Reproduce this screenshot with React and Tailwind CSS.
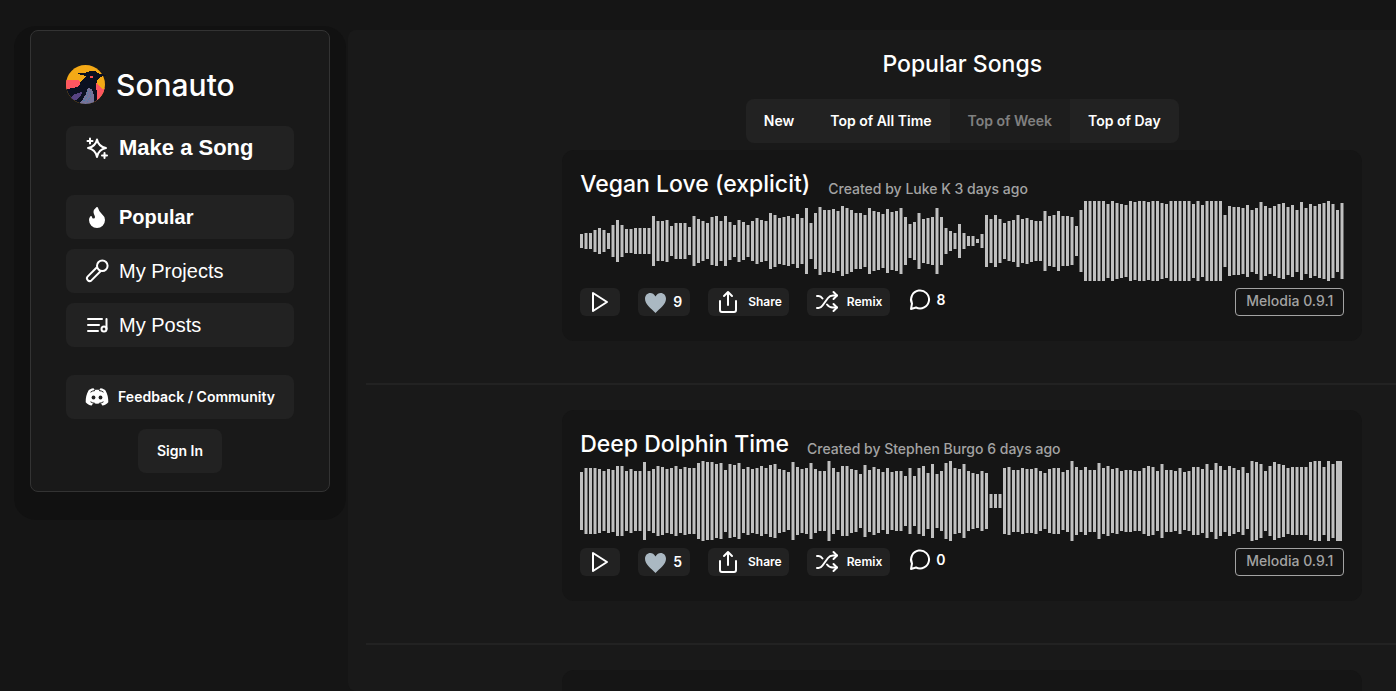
import React, { useState } from "react";
import { Flame } from "lucide-react";

// bar heights, in pixels
const veganLove = [
	14, 16, 16, 22, 26, 22, 16, 32, 42, 32, 24, 24, 26, 26, 26, 26, 50, 40, 40, 42,
	30, 36, 36, 36, 28, 50, 44, 40, 36, 48, 50, 40, 50, 38, 32, 42, 38, 32, 40, 46,
	42, 40, 56, 52, 46, 48, 50, 46, 54, 46, 66, 36, 56, 68, 62, 62, 64, 60, 70, 66,
	62, 56, 56, 52, 66, 60, 58, 54, 64, 58, 60, 66, 48, 34, 38, 56, 44, 46, 48, 66,
	48, 26, 20, 16, 34, 16, 10, 10, 4, 14, 52, 44, 52, 44, 36, 40, 42, 52, 44, 46,
	42, 40, 40, 60, 50, 52, 60, 50, 50, 48, 30, 62, 80, 80, 80, 80, 80, 74, 80, 76,
	74, 72, 80, 78, 80, 80, 78, 80, 80, 76, 74, 80, 80, 80, 80, 80, 74, 80, 72, 80,
	80, 80, 80, 52, 70, 68, 68, 66, 72, 62, 66, 78, 70, 66, 70, 74, 76, 68, 72, 62,
	78, 66, 74, 70, 74, 76, 80, 74, 62, 76,
];

const deepDolphin = [
	58, 66, 66, 66, 64, 60, 64, 62, 70, 70, 60, 64, 60, 60, 78, 60, 64, 70, 68, 64,
	66, 70, 64, 68, 66, 66, 76, 80, 78, 78, 74, 76, 62, 74, 72, 76, 64, 68, 64, 66,
	70, 66, 72, 74, 64, 62, 58, 78, 68, 64, 66, 76, 64, 60, 60, 80, 66, 58, 70, 70,
	64, 62, 54, 72, 62, 68, 64, 58, 66, 58, 60, 60, 50, 66, 50, 66, 70, 56, 74, 54,
	60, 76, 80, 66, 64, 74, 60, 56, 54, 60, 56, 14, 14, 14, 66, 68, 62, 62, 66, 64,
	64, 66, 60, 56, 64, 66, 66, 58, 62, 80, 68, 62, 68, 62, 62, 76, 66, 70, 64, 66,
	60, 62, 62, 60, 60, 66, 70, 68, 60, 74, 62, 62, 60, 66, 58, 60, 68, 68, 64, 74,
	62, 76, 70, 62, 70, 66, 62, 68, 56, 80, 78, 74, 60, 70, 78, 74, 72, 66, 68, 68,
	68, 68, 78, 80, 80, 68, 80, 74, 80,
];

const songs = [
	{ id: 1, title: "Vegan Love (explicit)", credit: "Created by Luke K 3 days ago", likes: 9, comments: 8, bars: veganLove, lastWidth: 3 },
	{ id: 2, title: "Deep Dolphin Time", credit: "Created by Stephen Burgo 6 days ago", likes: 5, comments: 0, bars: deepDolphin, lastWidth: 6 },
];

const tabs = ["New", "Top of All Time", "Top of Week", "Top of Day"];

function Logo() {
	return (
		<svg width="40" height="40" viewBox="0 0 40 40" shapeRendering="crispEdges" aria-hidden="true">
			<clipPath id="disc">
				<circle cx="19.5" cy="19.5" r="19.5" />
			</clipPath>
			<g clipPath="url(#disc)">
				<rect width="40" height="40" fill="#f4a916" />
				<path d="M0 15h12l2 2v8H0z" fill="#fd5660" />
				<path d="M30 18l3 2 3 4 4-1v17H29z" fill="#fd5660" />
				<path d="M0 24l7-1 6-2 2-4 15-1v6l1 6v8l-2 4H8l-8-6z" fill="#0b1020" />
				<path d="M5 32l4-3 7-2-1 4-5 4H5z" fill="#574382" />
				<path d="M22 23l4 1 2 6v9H13l4-5 3-5z" fill="#767399" />
				<path d="M22 26l-1 5-4 6M25 27l-1 5-3 5" stroke="#4a7fa8" strokeDasharray="1 1" fill="none" />
			</g>
			<path d="M11 8h7l4-1 2-1h5l2 2 4 1 5 1v1h-2l-4 1-3 3-1 7H14v-4l3-4 3-3-5-1-2-1z" fill="#0b1020" />
			<rect x="24" y="11" width="3" height="2" fill="#fd4f50" />
		</svg>
	);
}

function Sparkles() {
	return (
		<svg width="24" height="24" viewBox="0 0 24 24" fill="none" stroke="currentColor" strokeWidth="2" strokeLinejoin="round" strokeLinecap="round">
			<path d="M12 3.500c1 5 3.500 7.500 9 8.500-5.500 1-8 3.500-9 9-1-5.500-3.500-8-9-9 5.500-1 8-3.500 9-8.500z" />
			<path d="M5 2.500v5M2.500 5h5M19.500 17v5M17 19.500h5" />
		</svg>
	);
}

function Mic() {
	return (
		<svg width="24" height="24" viewBox="0 0 24 24" fill="none" stroke="currentColor" strokeWidth="2" strokeLinejoin="round">
			<circle cx="17.300" cy="6.700" r="5.300" />
			<path d="M12.200 8L2.600 17.600a2.700 2.700 0 0 0 3.800 3.800L16 11.800" />
		</svg>
	);
}

function Playlist() {
	return (
		<svg width="24" height="24" viewBox="0 0 24 24" fill="none" stroke="currentColor" strokeWidth="2" strokeLinecap="round">
			<path d="M3 6h14M3 12h11M3 18h10" />
			<circle cx="19" cy="16" r="2.500" />
			<path d="M21.500 16V6" />
		</svg>
	);
}

function Discord() {
	return (
		<svg width="24" height="24" viewBox="0 0 24 24" fill="none" aria-hidden="true">
			<path d="M8.500 3.300C6 3.600 4.300 4.600 3.500 5.500 1.500 9 .6 13 .7 17.200c1.600 1.900 3.600 3 6 3.300l1.400-2.200c2.600.5 5.200.5 7.800 0l1.400 2.200c2.400-.3 4.400-1.400 6-3.300.1-4.200-.8-8.200-2.800-11.700-.8-.9-2.500-1.900-5-2.200l-1.200 1.600c-1.600-.2-3-.2-4.600 0z" fill="currentColor" />
			<path d="M5.500 7.200C7 6 9 5.400 12 5.400M18.500 7.200C17 6 15 5.400 12 5.400" stroke="#222222" strokeWidth="1" strokeDasharray="5 8" />
			<path d="M5.500 16.800c1.500.9 2.800 1.300 4.500 1.600M18.500 16.800c-1.500.9-2.800 1.300-4.500 1.600" stroke="#222222" strokeWidth="1" />
			<ellipse cx="8.500" cy="12.500" rx="1.900" ry="2" fill="#222222" />
			<ellipse cx="15.500" cy="12.500" rx="1.900" ry="2" fill="#222222" />
		</svg>
	);
}

function Play() {
	return (
		<svg width="24" height="24" viewBox="0 0 24 24" fill="none" stroke="currentColor" strokeWidth="2" strokeLinejoin="round">
			<path d="M5 3l14 9-14 9z" />
		</svg>
	);
}

function Heart() {
	return (
		<svg width="22" height="22" viewBox="0 0 22 22" fill="#aab8c2" className="mt-0.5">
			<path d="M11.500 4.500C10.200 2 8.200 1 6.400 1 3.300 1 1 3.300 1 6.800c0 5.500 6 9.700 10.500 14.200C16 16.500 22 12.300 22 6.800 22 3.300 19.700 1 16.600 1c-1.800 0-3.800 1-5.100 3.500z" />
		</svg>
	);
}

function ShareIcon() {
	return (
		<svg width="24" height="24" viewBox="0 0 24 24" fill="none" stroke="currentColor" strokeWidth="2" strokeLinejoin="round" strokeLinecap="round">
			<path d="M4 11v9a2 2 0 0 0 2 2h12a2 2 0 0 0 2-2v-9" />
			<path d="M12 15V2M8 6l4-4 4 4" />
		</svg>
	);
}

function Shuffle() {
	return (
		<svg width="24" height="24" viewBox="0 0 24 24" fill="none" stroke="currentColor" strokeWidth="2" strokeLinejoin="round" strokeLinecap="round">
			<path d="M2 18h1.500c2 0 3-1 4-2.500l5.500-7.500C14.500 6 15.500 5.500 18 5.500h4" />
			<path d="M2 6h1.500c2 0 3 1 4 2.500M12 14.500c1.500 2 3 3 5.500 3H22" />
			<path d="M18.500 2l3.500 3.500L18.500 9M18.500 14l3.500 3.500-3.500 3.500" />
		</svg>
	);
}

function Comment() {
	return (
		<svg width="24" height="24" viewBox="0 0 24 24" fill="none" stroke="currentColor" strokeWidth="2" strokeLinejoin="round">
			<path d="M3 21l1-5.500a9 9 0 1 1 4 4z" />
		</svg>
	);
}

function Waveform({ bars, lastWidth }) {
	return (
		<svg className="block h-20 w-full" viewBox="0 0 764 80" fill="#c0c0c0" role="img" aria-label="Waveform">
			{bars.map((h, i) => (
				<rect key={i} x={i * 4.5} y={40 - h / 2} width={i === bars.length - 1 ? lastWidth : 3} height={h} />
			))}
		</svg>
	);
}

function SongCard({ song }) {
	return (
		<article className="mx-auto w-[800px] rounded-xl bg-[#151515] px-[18px] pt-5 pb-[25px]">
			<div className="mb-[3px] flex h-7 items-end gap-[18px]">
				<h2 className="text-[23px] leading-7 font-medium text-white">{song.title}</h2>
				<span className="text-sm leading-[18px] font-medium text-[#a3a3a3]">{song.credit}</span>
			</div>
			<Waveform bars={song.bars} lastWidth={song.lastWidth} />
			<div className="mt-[7px] flex items-center gap-[18px] font-semibold">
				<button aria-label="Play" className="flex h-7 w-10 items-center justify-center rounded-md bg-[#222222]">
					<Play />
				</button>
				<button aria-label="Like" className="flex h-7 items-center gap-[7px] rounded-md bg-[#222222] pr-2 pl-[6px] text-sm">
					<Heart />
					{song.likes}
				</button>
				<button className="flex h-7 items-center gap-2 rounded-md bg-[#222222] pr-[7px] pl-2 text-xs">
					<ShareIcon />
					Share
				</button>
				<button className="flex h-7 items-center gap-2 rounded-md bg-[#222222] px-2 text-xs">
					<Shuffle />
					Remix
				</button>
				<button className="mb-1 flex items-center gap-1 text-sm">
					<Comment />
					{song.comments}
				</button>
				<span className="ml-auto flex h-7 items-center rounded border border-[#a3a3a3] px-[10px] pb-0.5 text-sm font-medium text-[#a3a3a3]">
					Melodia 0.9.1
				</span>
			</div>
		</article>
	);
}

function NavButton({ icon, label, className }) {
	return (
		<button className={"flex h-11 w-full items-center gap-[10px] rounded-lg bg-[#222222] pl-[19px] font-['Liberation_Sans',Arial,sans-serif] " + className}>
			{icon}
			{label}
		</button>
	);
}

function Sidebar() {
	return (
		<aside className="m-[30px] mr-[18px] w-[300px] shrink-0 self-start rounded-lg border border-[#333333] bg-[#191919] px-[35px] pt-[34px] pb-[18px] shadow-[0_12px_0_16px_#111111]">
			<a href="#" className="flex items-center gap-[10px] text-3xl leading-10 font-medium">
				<Logo />
				<span>Sonauto</span>
			</a>
			<nav className="mt-[21px] flex flex-col gap-[10px]">
				<NavButton icon={<Sparkles />} label="Make a Song" className="mb-[15px] text-[22px] leading-6 font-bold" />
				<NavButton icon={<Flame size={24} fill="currentColor" />} label="Popular" className="text-xl font-bold" />
				<NavButton icon={<Mic />} label="My Projects" className="text-xl" />
				<NavButton icon={<Playlist />} label="My Posts" className="text-xl" />
			</nav>
			<div className="mt-7 flex flex-col items-center gap-[10px] text-sm font-semibold">
				<a href="#" className="flex h-11 w-full items-center justify-center gap-[9px] rounded-lg bg-[#222222] whitespace-nowrap">
					<Discord />
					Feedback / Community
				</a>
				<button className="h-11 rounded-lg bg-[#222222] px-[19px]">Sign In</button>
			</div>
		</aside>
	);
}

export default function App() {
	const [active, setActive] = useState("Top of Week");

	return (
		<div className="flex h-screen overflow-hidden bg-[#151515] font-[Inter,sans-serif] text-white">
			<Sidebar />
			<main className="mt-[30px] w-[88%] shrink-0 rounded-l-lg bg-[#191919] px-[18px] pt-[18px]">
				<h1 className="text-center text-[23px] leading-8 font-medium">Popular Songs</h1>
				<div className="mx-auto mt-[19px] mb-[7px] flex w-fit overflow-hidden rounded-lg text-sm font-semibold">
					{tabs.map((tab) => (
						<button
							key={tab}
							onClick={() => setActive(tab)}
							className={"h-11 px-[18px] " + (tab === active ? "bg-[#1d1d1d] text-[#808080]" : "bg-[#222222] text-white")}
						>
							{tab}
						</button>
					))}
				</div>
				{songs.map((song) => (
					<React.Fragment key={song.id}>
						<SongCard song={song} />
						<hr className="mt-[42px] mb-[25px] border-t-2 border-[#222222]" />
					</React.Fragment>
				))}
				{/* next song, still loading */}
				<div className="mx-auto h-48 w-[800px] rounded-xl bg-[#151515]" />
			</main>
		</div>
	);
}
